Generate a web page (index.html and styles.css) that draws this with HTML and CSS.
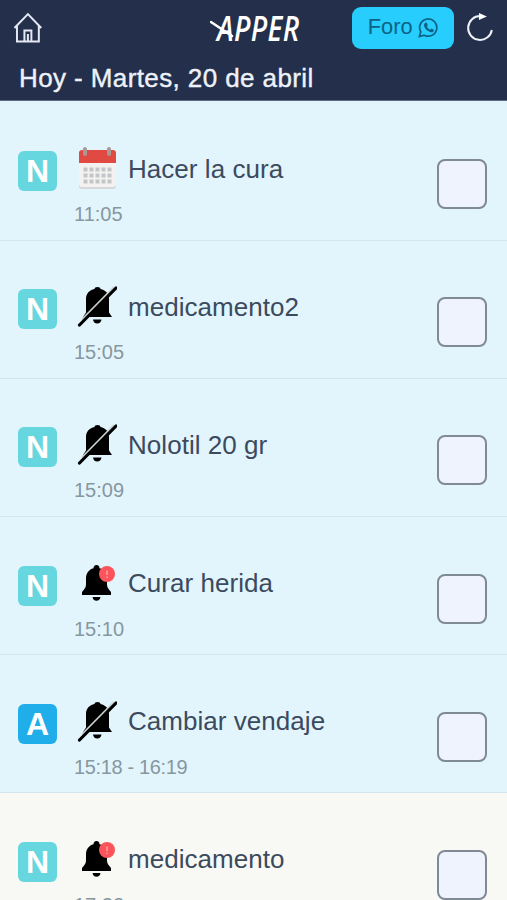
FILE: index.html
```html
<!DOCTYPE html>
<html lang="es">
<head>
    <meta charset="UTF-8">
    <meta name="viewport" content="width=device-width, initial-scale=1.0">
    <title>Apper</title>
    <link rel="stylesheet" href="styles.css">
</head>
<body>
    <svg class="sprite" width="0" height="0">
        <symbol id="calendar" viewBox="0 0 40 44">
            <rect x="2" y="5" width="37" height="38" rx="3" fill="#d5d7d8"/>
            <rect x="2" y="4" width="37" height="37" rx="3" fill="#f3f2f0"/>
            <path d="M2 17V7a3 3 0 0 1 3-3h31a3 3 0 0 1 3 3v10z" fill="#e04a42"/>
            <path d="M8 3v5M32 3v5" stroke="#a79a96" stroke-width="4" stroke-linecap="round"/>
            <path d="M6.500 23.500h28M6.500 29.500h28M6.500 35.500h28" stroke="#c3c6c8" stroke-width="4" stroke-dasharray="4 2"/>
        </symbol>
        <symbol id="bell-off" viewBox="0 0 40 44">
            <path d="M20.500 3c1.800 0 3 .8 3 2 5 1 8.500 4.500 8.500 10v13.500l3 4.500H6l3-4.500V15c0-5.500 3.500-9 8.500-10 0-1.200 1.200-2 3-2z" fill="#000"/>
            <path d="M16 35.500h8.500c-.5 2.500-1.800 4-4.300 4s-3.700-1.500-4.200-4z" fill="#000"/>
            <path d="M5 35.500L37 3" stroke="#ccd3d4" stroke-width="1.800"/>
            <path d="M2.500 41L39 4" stroke="#000" stroke-width="3.200" stroke-linecap="round"/>
        </symbol>
        <symbol id="bell-alert" viewBox="0 0 40 44">
            <path d="M19.500 4c2 0 3 1.300 3 3.300 4.500 1.200 7.500 5 7.500 10.200v6c0 3 1.500 4.500 4 7.500V34H5v-3c2.500-3 4-4.500 4-7.500v-6C9 12.300 12 8.500 16.500 7.300c0-2 1-3.300 3-3.300z" fill="#000"/>
            <path d="M15.500 36h8c-.5 2.500-1.700 3.800-4 3.800s-3.500-1.300-4-3.800z" fill="#000"/>
            <circle cx="30" cy="13" r="8" fill="#fb555b"/>
            <path d="M30 9.500v4.500M30 15.500v1.500" stroke="#fda3a0" stroke-width="1.500"/>
        </symbol>
    </svg>

    <header class="header">
        <div class="toolbar">
            <svg class="home" viewBox="0 0 30 32" fill="none" stroke="#e3e8f2" stroke-width="2">
                <path d="M1.500 16L15 2l13.500 14M4 14v15.500h22V14M11.500 29V18.500h7V29M15 22v7"/>
            </svg>
            <div class="logo">
                <span class="logo-text">APPER</span>
                <svg class="logo-stroke" viewBox="0 0 24 20"><path d="M1 2l21 14" stroke="#fff" stroke-width="2.500" stroke-linecap="round"/></svg>
            </div>
            <button class="foro">Foro
                <svg class="whatsapp" viewBox="0 0 22 22">
                    <path d="M1.500 20.500l1.400-5A9 9 0 1 1 6.500 19z" fill="none" stroke="#0c6385" stroke-width="1.800"/>
                    <path d="M7.700 6l1.300-.3 1.300 3-1 1.300c.8 1.600 1.900 2.600 3.500 3.300l1.200-1.300 2.700 1.300c0 2-1.500 2.900-3 2.700C10 15.500 6.500 12 6.300 8.500c0-1 .5-1.900 1.400-2.500z" fill="#0c6385"/>
                </svg>
            </button>
            <svg class="refresh" viewBox="0 0 28 30">
                <path d="M14.500 3A12 12 0 1 0 26 17" fill="none" stroke="#eef1f7" stroke-width="2"/>
                <path d="M13 0l8 3.500-8 3.500z" fill="#fff"/>
            </svg>
        </div>
        <h1 class="date">Hoy - Martes, 20 de abril</h1>
    </header>

    <main class="list">
        <div class="task">
            <span class="tag">N</span>
            <div class="info">
                <div class="name"><svg class="icon"><use href="#calendar"/></svg>Hacer la cura</div>
                <div class="time">11:05</div>
            </div>
            <span class="check"></span>
        </div>
        <div class="task">
            <span class="tag">N</span>
            <div class="info">
                <div class="name"><svg class="icon"><use href="#bell-off"/></svg>medicamento2</div>
                <div class="time">15:05</div>
            </div>
            <span class="check"></span>
        </div>
        <div class="task">
            <span class="tag">N</span>
            <div class="info">
                <div class="name"><svg class="icon"><use href="#bell-off"/></svg>Nolotil 20 gr</div>
                <div class="time">15:09</div>
            </div>
            <span class="check"></span>
        </div>
        <div class="task">
            <span class="tag">N</span>
            <div class="info">
                <div class="name"><svg class="icon"><use href="#bell-alert"/></svg>Curar herida</div>
                <div class="time">15:10</div>
            </div>
            <span class="check"></span>
        </div>
        <div class="task">
            <span class="tag tag-a">A</span>
            <div class="info">
                <div class="name"><svg class="icon"><use href="#bell-off"/></svg>Cambiar vendaje</div>
                <div class="time range">15:18 - 16:19</div>
            </div>
            <span class="check"></span>
        </div>
        <div class="task later">
            <span class="tag">N</span>
            <div class="info">
                <div class="name"><svg class="icon"><use href="#bell-alert"/></svg>medicamento</div>
                <div class="time">17:22</div>
            </div>
            <span class="check"></span>
        </div>
    </main>
</body>
</html>
```
FILE: styles.css
```css
* {
    box-sizing: border-box;
}

body {
    margin: 0;
    height: 900px;
    overflow: hidden;
    font-family: "Liberation Sans", Arial, sans-serif;
    background: #e2f5fd;
    color: #3c4a5e;
}

.sprite {
    display: block;
}

.header {
    height: 101px;
    background: #232f4b;
    border-bottom: 1px solid #5d6b80;
    color: #eef2f8;
}

.toolbar {
    display: flex;
    align-items: center;
    height: 56px;
    padding: 0 13px;
}

.home {
    width: 30px;
    height: 32px;
}

.logo {
    position: relative;
    margin-left: 174px;
    width: 84px;
    height: 34px;
}

.logo-text {
    display: block;
    font: italic 600 34px/34px "Open Sans", sans-serif;
    letter-spacing: 0.5px;
    color: #fff;
    transform: scaleX(0.82);
    transform-origin: left;
}

.logo-stroke {
    position: absolute;
    left: -7px;
    top: 9px;
    width: 24px;
    height: 20px;
}

.foro {
    display: flex;
    align-items: center;
    gap: 5px;
    margin-left: 51px;
    width: 103px;
    height: 42px;
    padding: 0 0 2px 16px;
    border: none;
    border-radius: 9px;
    background: #27cdfc;
    color: #0c6385;
    font: 21.8px "Liberation Sans", Arial, sans-serif;
}

.whatsapp {
    width: 21px;
    height: 21px;
}

.refresh {
    width: 28px;
    height: 30px;
    margin-left: 12px;
}

.date {
    margin: 0;
    padding-left: 19px;
    font-size: 26px;
    font-weight: normal;
    letter-spacing: 0.4px;
    line-height: 44px;
    -webkit-text-stroke: 0.4px #eef2f8;
}

.list {
    padding-top: 1.5px;
}

.task {
    display: flex;
    align-items: flex-start;
    height: 138.2px;
    padding: 0 20px 0 18px;
    border-bottom: 1px solid #d3e4ec;
}

.later {
    background: #f8f9f4;
}

.tag {
    width: 39px;
    height: 40px;
    margin-top: 48.5px;
    border-radius: 6px;
    background: #66d6df;
    color: #fff;
    font-size: 32px;
    font-weight: bold;
    line-height: 41px;
    text-align: center;
}

.tag-a {
    background: #20aeea;
}

.info {
    flex: 1;
    padding: 42.5px 0 0 17px;
}

.name {
    display: flex;
    align-items: center;
    height: 48px;
    font-size: 26px;
    letter-spacing: 0.04px;
}

.icon {
    width: 40px;
    height: 44px;
    margin: 0 11px 2px 3px;
}

.time {
    margin-top: 8px;
    font-size: 20px;
    line-height: 26px;
    color: #87979f;
}

.range {
    letter-spacing: -0.35px;
}

.check {
    width: 50px;
    height: 50px;
    margin-top: 56.5px;
    border: 2px solid #7f8a95;
    border-radius: 8px;
    background: #eff3fe;
}
```
